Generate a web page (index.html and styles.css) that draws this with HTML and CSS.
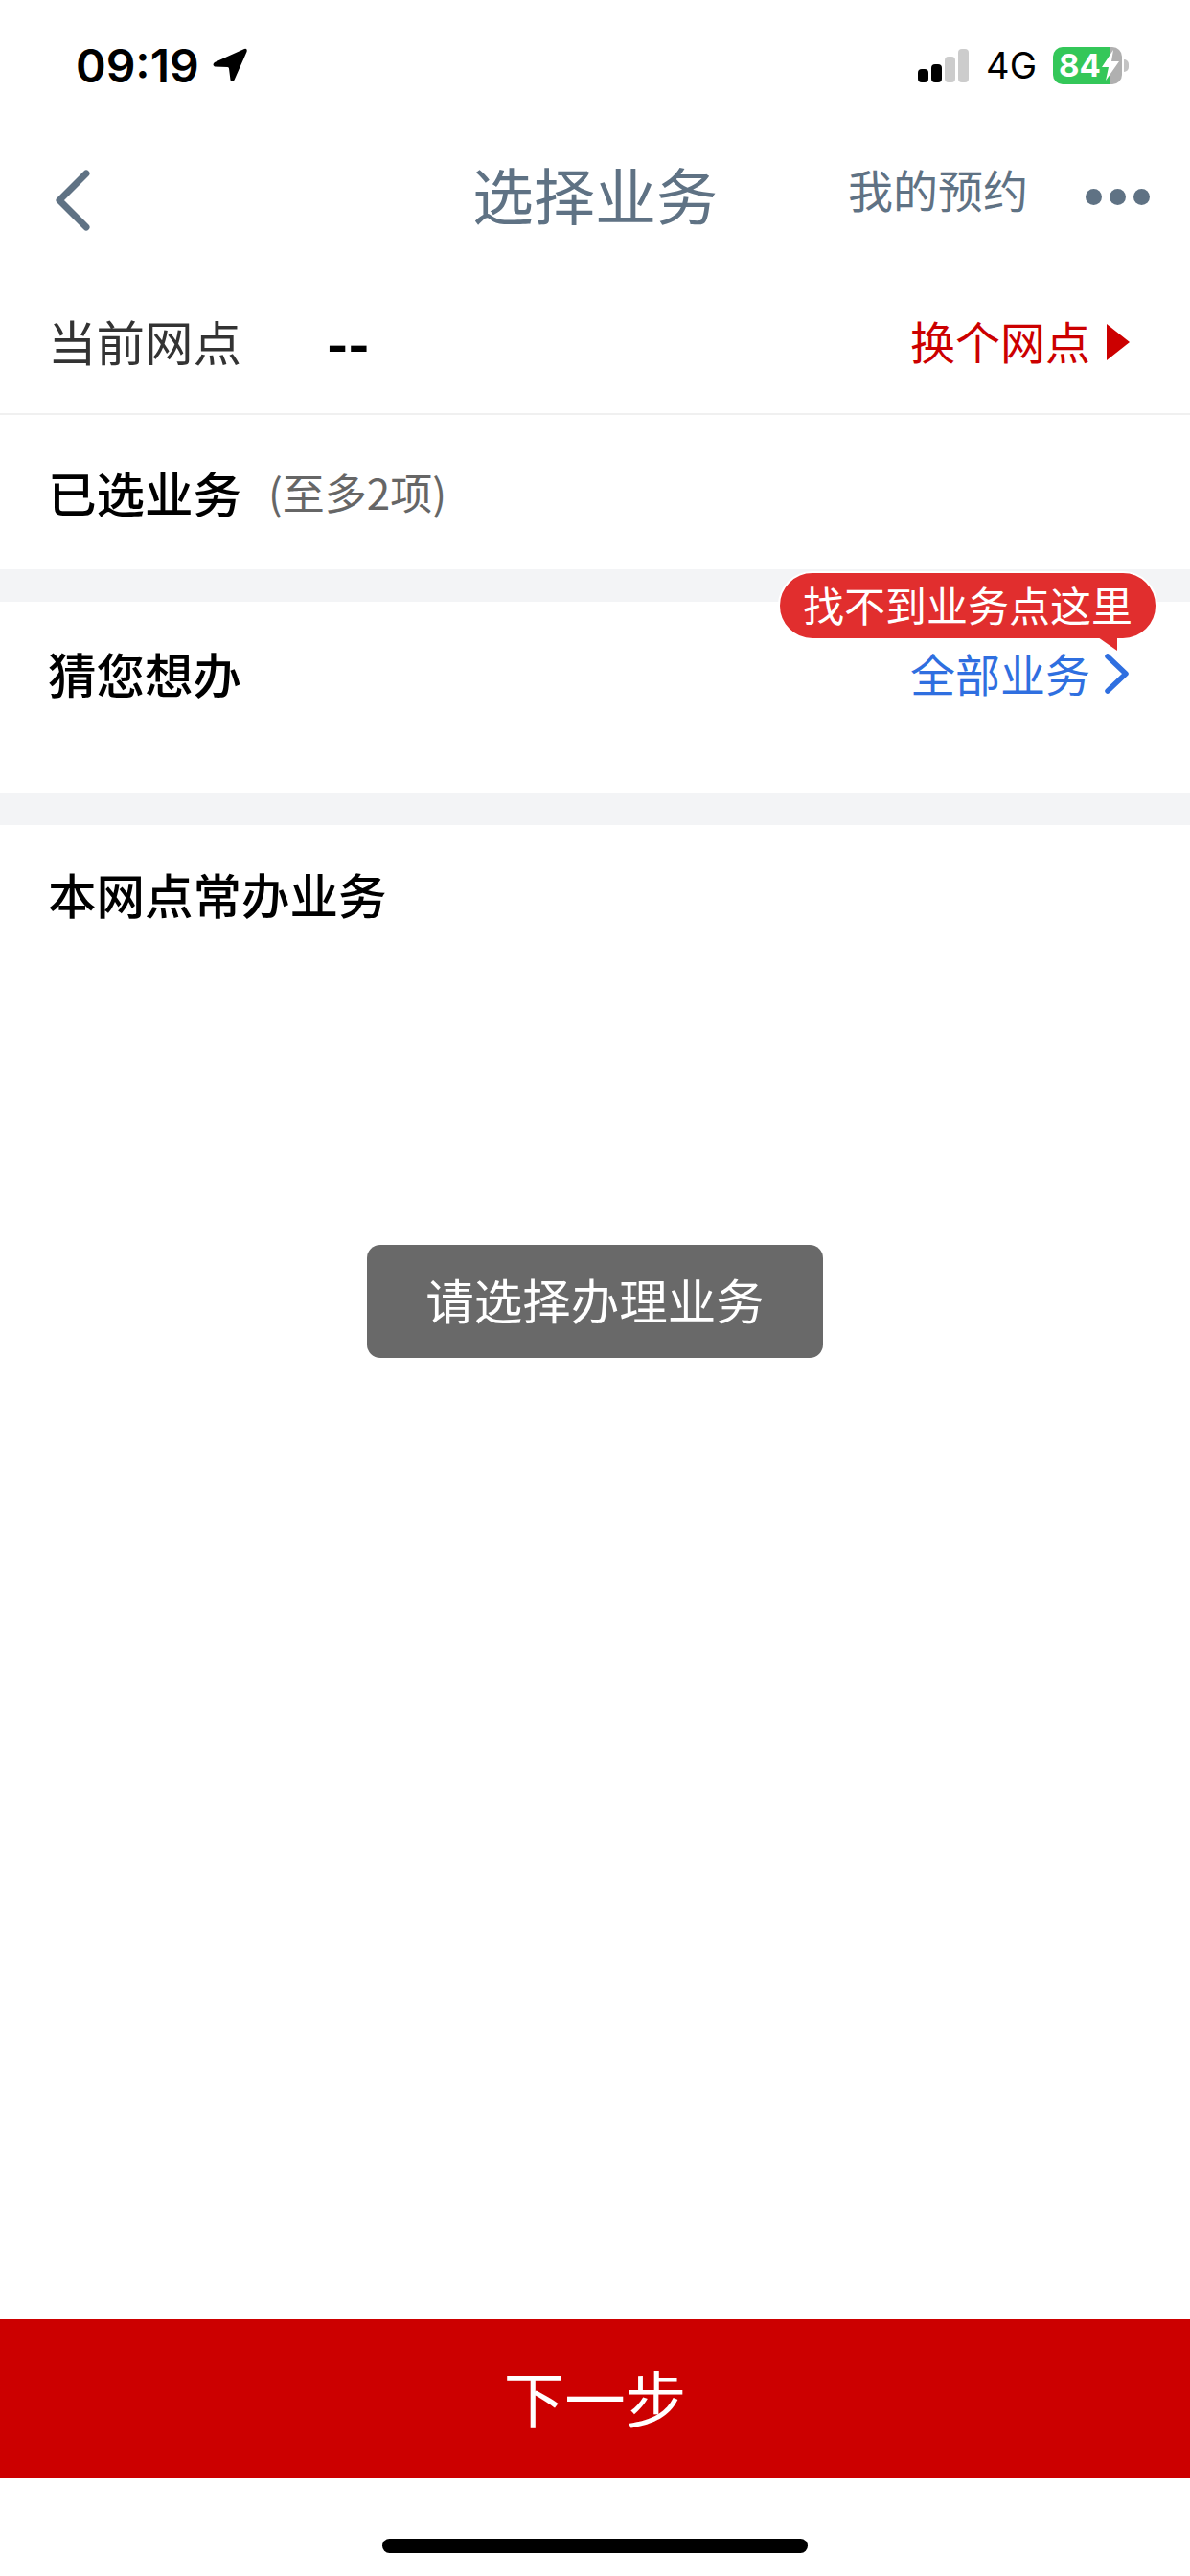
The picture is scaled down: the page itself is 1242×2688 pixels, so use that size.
FILE: index.html
```html
<!DOCTYPE html>
<html lang="zh-CN">

<head>
  <meta charset="UTF-8">
  <meta name="viewport" content="width=device-width, initial-scale=1.0">
  <title>选择业务</title>
  <link rel="stylesheet" href="styles.css">
</head>

<body>
  <div class="page">
    <div class="status-bar">
      <div class="status-left">
        <span class="time">09:19</span>
        <svg class="location" width="36" height="36" viewBox="0 0 36 36">
          <path d="M33 1 L2 15 Q-1 17.500 2 19.500 L15.500 20 Q17 20 17 21.500 L18.500 33.500 Q20 36.500 22.500 33.500 L35.500 4 Q36.500 0 33 1 Z" fill="#000"/>
        </svg>
      </div>
      <div class="status-right">
        <div class="signal">
          <span class="bar bar1"></span>
          <span class="bar bar2"></span>
          <span class="bar bar3"></span>
          <span class="bar bar4"></span>
        </div>
        <span class="network">4G</span>
        <div class="battery">
          <div class="battery-body">
            <span class="battery-text">84</span>
            <svg class="bolt" width="20" height="32" viewBox="0 0 20 32">
              <path d="M13 0 L1 18 H8 L5 32 L19 12 H11 Z" fill="#fff"/>
            </svg>
          </div>
          <span class="battery-nub"></span>
        </div>
      </div>
    </div>

    <div class="nav">
      <div class="nav-left">
        <svg class="back" width="40" height="66" viewBox="0 0 40 66">
          <path d="M34 5 L6 33 L34 61" fill="none" stroke="#5f7284" stroke-width="7" stroke-linecap="round" stroke-linejoin="round"/>
        </svg>
      </div>
      <div class="nav-title">选择业务</div>
      <div class="nav-right">
        <span class="nav-link">我的预约</span>
        <div class="dots">
          <span class="dot"></span>
          <span class="dot"></span>
          <span class="dot"></span>
        </div>
      </div>
    </div>

    <div class="row branch-row">
      <span class="row-label">当前网点</span>
      <span class="branch-value">--</span>
      <span class="branch-change">换个网点</span>
      <svg class="caret" width="26" height="40" viewBox="0 0 26 40">
        <path d="M1 1 L25 20 L1 39 Z" fill="#cc0000"/>
      </svg>
    </div>

    <div class="row selected-row">
      <span class="row-title">已选业务</span>
      <span class="row-hint">(至多2项)</span>
    </div>

    <div class="band"></div>

    <div class="row guess-row">
      <span class="row-title">猜您想办</span>
      <span class="all-link">全部业务</span>
      <svg class="chevron" width="26" height="42" viewBox="0 0 26 42">
        <path d="M3 3 L22 21 L3 39" fill="none" stroke="#2f6fe0" stroke-width="5.500" stroke-linecap="round" stroke-linejoin="round"/>
      </svg>
      <div class="tip">找不到业务点这里</div>
    </div>

    <div class="band"></div>

    <div class="common">
      <span class="row-title">本网点常办业务</span>
    </div>

    <div class="toast">请选择办理业务</div>

    <div class="next-btn">下一步</div>
    <div class="home-area">
      <span class="home-bar"></span>
    </div>
  </div>
</body>

</html>
```

FILE: styles.css
```css
* {
  box-sizing: border-box;
}

body {
  margin: 0;
  padding: 0;
  background-color: #fff;
  font-family: "Noto Sans CJK SC", Inter, sans-serif;
}

.page {
  position: relative;
  display: flex;
  flex-direction: column;
  width: 1242px;
  height: 2688px;
  overflow: hidden;
}

/* status bar */
.status-bar {
  display: flex;
  justify-content: space-between;
  align-items: center;
  height: 136px;
  margin-bottom: 4px;
  padding: 0 64px 0 79px;
}

.status-left,
.status-right {
  display: flex;
  align-items: center;
}

.time {
  font-family: Inter, sans-serif;
  font-size: 48px;
  font-weight: 600;
  letter-spacing: 0;
  color: #000;
}

.location {
  margin-left: 14px;
}

.signal {
  display: flex;
  align-items: flex-end;
  gap: 3px;
  height: 35px;
}

.bar {
  width: 11px;
  border-radius: 4px;
  background-color: #ccc;
}

.bar1 {
  height: 14px;
  background-color: #000;
}

.bar2 {
  height: 19px;
  background-color: #000;
}

.bar3 {
  height: 27px;
}

.bar4 {
  height: 35px;
}

.network {
  margin-left: 18px;
  font-family: Inter, sans-serif;
  font-size: 38px;
  color: #000;
}

.battery {
  display: flex;
  align-items: center;
  margin-left: 17px;
}

.battery-body {
  display: flex;
  align-items: center;
  width: 72px;
  height: 39px;
  padding-left: 6px;
  border-radius: 10px;
  background: linear-gradient(to right, #34c759 59px, #b0b0b0 59px);
}

.battery-text {
  font-family: Inter, sans-serif;
  font-size: 33px;
  font-weight: 700;
  color: #fff;
}

.battery-nub {
  width: 5px;
  height: 13px;
  margin-left: 2px;
  border-radius: 0 6px 6px 0;
  background-color: #c4c4c4;
}

/* nav */
.nav {
  display: grid;
  grid-template-columns: 1fr auto 1fr;
  align-items: center;
  height: 144px;
  padding: 0 42px 22px;
}

.nav-left {
  display: flex;
  align-items: center;
  padding-left: 14px;
}

.back {
  margin-top: 16px;
}

.nav-title {
  font-size: 64px;
  line-height: 80px;
  color: #5f7284;
}

.nav-right {
  display: flex;
  justify-content: flex-end;
  align-items: center;
}

.nav-link {
  padding-bottom: 8px;
  font-size: 47px;
  line-height: 60px;
  color: #5f7284;
}

.dots {
  display: flex;
  gap: 8px;
  margin: 8px 0 0 60px;
}

.dot {
  width: 17px;
  height: 17px;
  border-radius: 50%;
  background-color: #5f7284;
}

/* rows */
.row {
  position: relative;
  display: flex;
  align-items: center;
  padding: 0 50px;
}

.branch-row {
  height: 149px;
  padding-bottom: 6px;
  border-bottom: 2px solid #f0f0f0;
}

.row-label {
  width: 291px;
  font-size: 50.500px;
  color: #333;
}

.branch-value {
  flex: 1;
  font-size: 60px;
  font-weight: 700;
  line-height: 60px;
  color: #000;
}

.branch-change,
.all-link {
  font-size: 47px;
}

.branch-change {
  color: #cc0000;
}

.caret {
  margin: 5px 12px 0 16px;
}

.selected-row {
  height: 161px;
  padding-bottom: 2px;
}

.row-title {
  font-size: 50.500px;
  font-weight: 500;
  color: #000;
}

.row-hint {
  margin-left: 28px;
  font-size: 44px;
  color: #666;
}

.band {
  height: 34px;
  background-color: #f3f4f6;
}

.guess-row {
  align-items: flex-start;
  height: 199px;
  padding-top: 39px;
}

.guess-row .row-title {
  line-height: 70px;
  flex: 1;
}

.all-link {
  line-height: 70px;
  color: #2f6fe0;
}

.chevron {
  margin: 15px 13px 0 15px;
}

/* bubble sits over the band and the row */
.tip {
  position: absolute;
  top: -32px;
  right: 34px;
  width: 396px;
  height: 72px;
  border: 2px solid #fff;
  border-radius: 36px;
  background-color: #e12e2e;
  font-size: 43px;
  line-height: 64px;
  text-align: center;
  color: #fff;
}

.tip::after {
  content: "";
  position: absolute;
  top: 67px;
  right: 40px;
  width: 0;
  height: 0;
  border-top: 14px solid #e12e2e;
  border-left: 20px solid transparent;
}

.common {
  flex: 1;
  padding: 36px 50px 0;
  line-height: 70px;
}

.toast {
  position: absolute;
  top: 1299px;
  left: 383px;
  width: 476px;
  height: 118px;
  border-radius: 14px;
  background-color: #696969;
  font-size: 50.500px;
  line-height: 112px;
  text-align: center;
  color: #fff;
}

.next-btn {
  height: 166px;
  background-color: #cc0000;
  font-size: 63.500px;
  line-height: 160px;
  text-align: center;
  color: #fff;
}

.home-area {
  display: flex;
  justify-content: center;
  height: 102px;
  padding-top: 63px;
}

.home-bar {
  width: 444px;
  height: 15px;
  border-radius: 8px;
  background-color: #000;
}
```
